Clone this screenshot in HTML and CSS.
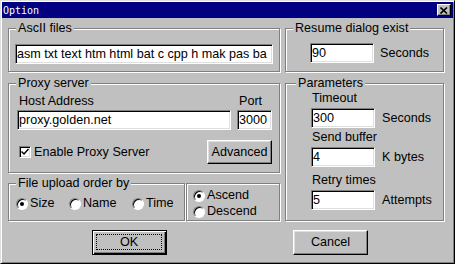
FILE: index.html
```html
<!DOCTYPE html>
<html lang="en">
<head>
    <meta charset="UTF-8">
    <title>Option</title>
    <link rel="stylesheet" href="styles.css">
</head>
<body>
    <div class="window">
        <div class="titlebar">
            <span class="title">Option</span>
            <span class="close">
                <svg width="8" height="7" viewBox="0 0 8 7"><path d="M0.5 0.5 L7 6.5 M7 0.5 L0.5 6.5" stroke="#000" stroke-width="1.6"/></svg>
            </span>
        </div>

        <div class="content">
            <div class="panes">
                <div class="col col-left">
                    <fieldset class="group group-ascii">
                        <legend>AscII files</legend>
                        <div class="field wide">asm txt text htm html bat c cpp h mak pas ba</div>
                    </fieldset>

                    <fieldset class="group group-proxy">
                        <legend>Proxy server</legend>
                        <div class="host-row">
                            <div class="stack host">
                                <span class="cap">Host Address</span>
                                <div class="field">proxy.golden.net</div>
                            </div>
                            <div class="stack port">
                                <span class="cap">Port</span>
                                <div class="field">3000</div>
                            </div>
                        </div>
                        <div class="enable-row">
                            <span class="check">
                                <svg width="8" height="8" viewBox="0 0 8 8"><path d="M0.5 3.5 L3 6 L7.5 1" fill="none" stroke="#000" stroke-width="1.5"/></svg>
                            </span>
                            <span>Enable Proxy Server</span>
                            <button class="btn btn-adv">Advanced</button>
                        </div>
                    </fieldset>

                    <div class="order-row">
                        <fieldset class="group group-order">
                            <legend>File upload order by</legend>
                            <div class="radios">
                                <span class="opt opt-size"><span class="radio on"></span>Size</span>
                                <span class="opt opt-name"><span class="radio"></span>Name</span>
                                <span class="opt"><span class="radio"></span>Time</span>
                            </div>
                        </fieldset>
                        <div class="group group-dir">
                            <span class="opt"><span class="radio on"></span>Ascend</span>
                            <span class="opt"><span class="radio"></span>Descend</span>
                        </div>
                    </div>
                </div>

                <div class="col col-right">
                    <fieldset class="group group-resume">
                        <legend>Resume dialog exist</legend>
                        <div class="unit-row resume-row">
                            <div class="field small">90</div>
                            <span>Seconds</span>
                        </div>
                    </fieldset>

                    <fieldset class="group group-params">
                        <legend>Parameters</legend>
                        <div class="param">
                            <span class="cap">Timeout</span>
                            <div class="unit-row">
                                <div class="field small">300</div>
                                <span>Seconds</span>
                            </div>
                        </div>
                        <div class="param param-buffer">
                            <span class="cap">Send buffer</span>
                            <div class="unit-row">
                                <div class="field small">4</div>
                                <span>K bytes</span>
                            </div>
                        </div>
                        <div class="param param-retry">
                            <span class="cap">Retry times</span>
                            <div class="unit-row">
                                <div class="field small">5</div>
                                <span>Attempts</span>
                            </div>
                        </div>
                    </fieldset>
                </div>
            </div>

            <div class="actions">
                <button class="btn btn-main btn-default"><span class="focus">OK</span></button>
                <button class="btn btn-main">Cancel</button>
            </div>
        </div>
    </div>
</body>
</html>
```

FILE: styles.css
```css
* {
    box-sizing: border-box;
}

body {
    margin: 0;
    background-color: #c0c0c0;
    font-family: "Liberation Sans", Arial, sans-serif;
    font-size: 12.6px;
    line-height: 15px;
    color: #000;
}

/* window frame */
.window {
    width: 455px;
    height: 264px;
    padding: 1px;
    background-color: #c0c0c0;
    border: 1px solid;
    border-color: #dfdfdf #000 #000 #dfdfdf;
    box-shadow: inset 1px 1px #fff, inset -1px -1px #808080;
}

.titlebar {
    height: 16px;
    background-color: #000080;
    display: flex;
    align-items: center;
    justify-content: space-between;
    padding: 0 2px 0 1px;
}

.title {
    font-family: "DejaVu Sans Mono", monospace;
    font-size: 10px;
    color: #fff;
}

.close {
    width: 14px;
    height: 12px;
    display: flex;
    align-items: center;
    justify-content: center;
    background-color: #c0c0c0;
    border: 1px solid;
    border-color: #fff #000 #000 #fff;
    box-shadow: inset -1px -1px #808080;
}

.content {
    padding: 3px 9px 0 6px;
}

.panes {
    display: flex;
    gap: 5px;
}

.col {
    display: flex;
    flex-direction: column;
}

.col-left {
    width: 272px;
}

.col-right {
    width: 159px;
}

/* etched group boxes */
.group {
    margin: 0;
    padding: 0 6px;
    min-width: 0;
    border: 1px solid #808080;
    box-shadow: inset 1px 1px #fff, 1px 1px #fff;
}

.group legend {
    padding: 0 2px;
    margin-left: 1px;
    line-height: 15px;
    background-color: #c0c0c0;
}

.group-ascii,
.group-resume {
    height: 51px;
}

.group-proxy {
    height: 97px;
    margin-top: 4px;
}

.group-params {
    height: 145px;
    margin-top: 4px;
}

.group-params legend {
    margin-left: 4px;
}

/* sunken edit boxes */
.field {
    height: 20px;
    padding: 1px;
    background-color: #fff;
    border: 1px solid;
    border-color: #808080 #fff #fff #808080;
    box-shadow: inset 1px 1px #000, inset -1px -1px #dfdfdf;
    line-height: 16px;
    white-space: nowrap;
    overflow: hidden;
}

.field.wide {
    margin-top: 8px;
}

.field.small {
    width: 64px;
}

.cap {
    padding-left: 2px;
}

/* proxy */
.host-row {
    display: flex;
    gap: 6px;
    margin: 3px 0 0 2px;
}

.stack {
    display: flex;
    flex-direction: column;
    gap: 1px;
}

.host .field {
    width: 214px;
}

.port .field {
    width: 35px;
}

.enable-row {
    display: flex;
    align-items: center;
    gap: 3px;
    margin-top: 10px;
    padding-left: 4px;
}

.check {
    width: 12px;
    height: 12px;
    display: flex;
    align-items: center;
    justify-content: center;
    background-color: #fff;
    border: 1px solid;
    border-color: #808080 #fff #fff #808080;
    box-shadow: inset 1px 1px #000, inset -1px -1px #dfdfdf;
}

/* buttons */
.btn {
    font: inherit;
    color: #000;
    padding: 0;
    background-color: #c0c0c0;
    border: 1px solid;
    border-color: #fff #000 #000 #fff;
    box-shadow: inset -1px -1px #808080, inset 1px 1px #dfdfdf;
}

.btn-adv {
    width: 65px;
    height: 24px;
    margin: 0 1px 0 auto;
}

.btn-main {
    width: 75px;
    height: 25px;
}

.btn-default {
    border-color: #000;
    box-shadow: inset 1px 1px #fff, inset -1px -1px #000, inset -2px -2px #808080;
    padding: 3px 4px 4px 3px;
}

.focus {
    display: flex;
    align-items: center;
    justify-content: center;
    height: 100%;
    border: 1px dotted #000;
}

/* radio options */
.order-row {
    display: flex;
    align-items: flex-end;
    gap: 1px;
    margin-top: 3px;
}

.group-order {
    flex: none;
    width: 177px;
    height: 45px;
}

.group-dir {
    flex: 1;
    height: 38px;
    padding: 4px 0 0 6px;
    display: flex;
    flex-direction: column;
    gap: 1px;
}

.radios {
    display: flex;
    margin-top: 5px;
    padding-left: 1px;
}

.opt {
    display: flex;
    align-items: center;
    gap: 2px;
}

.opt-size {
    width: 53px;
}

.opt-name {
    width: 63px;
}

.radio {
    position: relative;
    width: 12px;
    height: 12px;
    border-radius: 50%;
    background-color: #fff;
    border: 1px solid;
    border-color: #808080 #fff #fff #808080;
    box-shadow: inset 1px 1px #000;
}

.radio.on::after {
    content: "";
    position: absolute;
    left: 3px;
    top: 3px;
    width: 4px;
    height: 4px;
    border-radius: 50%;
    background-color: #000;
}

/* right column */
.unit-row {
    display: flex;
    align-items: center;
    gap: 6px;
}

.resume-row {
    margin: 7px 0 0 18px;
}

.param {
    display: flex;
    flex-direction: column;
    gap: 2px;
    margin-left: 19px;
}

.param .cap {
    padding-left: 1px;
}

.param .unit-row {
    gap: 7px;
}

.param-buffer {
    margin-top: 2px;
}

.param-retry {
    margin-top: 6px;
}

.actions {
    display: flex;
    gap: 126px;
    padding-left: 84px;
    margin-top: 9px;
}
```
